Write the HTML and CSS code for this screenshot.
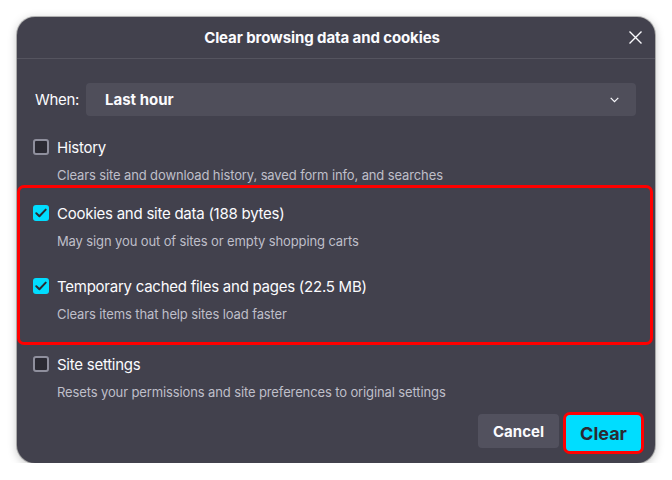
FILE: index.html
```html
<!DOCTYPE html>
<html lang="en">
<head>
<meta charset="utf-8">
<title>Clear browsing data and cookies</title>
<link rel="stylesheet" href="styles.css">
</head>
<body>
<div class="dialog">
  <div class="header">
    <div class="title">Clear browsing data and cookies</div>
    <button class="close" aria-label="Close">
      <svg width="13" height="13" viewBox="0 0 13 13"><path d="M0.5 0.5 L12.5 12.5 M12.5 0.5 L0.5 12.5" stroke="#fbfbfe" stroke-width="1.4" fill="none"/></svg>
    </button>
  </div>
  <div class="when">
    <span class="when-label">When:</span>
    <div class="select">
      <span class="select-value">Last hour</span>
      <svg class="chevron" width="9" height="6" viewBox="0 0 9 6"><path d="M0.7 0.8 L4.5 4.6 L8.3 0.8" stroke="#fbfbfe" stroke-width="1.2" fill="none"/></svg>
    </div>
  </div>

  <div class="item first">
    <div class="row"><span class="box"></span><span class="label">History</span></div>
    <div class="desc">Clears site and download history, saved form info, and searches</div>
  </div>

  <div class="highlight">
    <div class="item">
      <div class="row"><span class="box checked"><svg width="12" height="10" viewBox="0 0 12 10"><path d="M1.3 5.2 L4.4 8.2 L10.7 1.6" stroke="#2b2a33" stroke-width="2" fill="none" stroke-linecap="round" stroke-linejoin="round"/></svg></span><span class="label">Cookies and site data (188 bytes)</span></div>
      <div class="desc">May sign you out of sites or empty shopping carts</div>
    </div>
    <div class="item second">
      <div class="row"><span class="box checked"><svg width="12" height="10" viewBox="0 0 12 10"><path d="M1.3 5.2 L4.4 8.2 L10.7 1.6" stroke="#2b2a33" stroke-width="2" fill="none" stroke-linecap="round" stroke-linejoin="round"/></svg></span><span class="label">Temporary cached files and pages (22.5 MB)</span></div>
      <div class="desc">Clears items that help sites load faster</div>
    </div>
  </div>

  <div class="item after">
    <div class="row"><span class="box"></span><span class="label">Site settings</span></div>
    <div class="desc">Resets your permissions and site preferences to original settings</div>
  </div>

  <div class="footer">
    <button class="btn cancel">Cancel</button>
    <button class="btn clear">Clear</button>
  </div>
</div>
</body>
</html>
```

FILE: styles.css
```css
* { box-sizing: border-box; }
html, body { margin: 0; padding: 0; background: #ffffff; }
body {
  font-family: Inter, "Noto Sans", "Liberation Sans", sans-serif;
  color: #fbfbfe;
}
.dialog {
  margin: 17px 0 0 17px;
  width: 638px;
  height: 446px;
  background: #42414d;
  border-radius: 18px;
  box-shadow: 0 2px 10px rgba(0,0,0,0.25), 0 0 0 1px rgba(0,0,0,0.25);
  overflow: hidden;
}
.header {
  height: 42px;
  border-bottom: 1px solid #55545f;
  display: flex;
  align-items: center;
  justify-content: center;
  padding-right: 28px;
  position: relative;
}
.title {
  font-size: 15px;
  font-weight: 700;
  letter-spacing: -0.1px;
}
.close {
  position: absolute;
  right: 13px;
  top: 14px;
  width: 13px;
  height: 13px;
  padding: 0;
  border: 0;
  background: none;
  display: block;
}
.close svg { display: block; }
.when {
  display: flex;
  align-items: center;
  margin: 24px 19px 0 18px;
}
.when-label {
  font-size: 15px;
  letter-spacing: -0.3px;
  width: 51px;
}
.select {
  flex: 1;
  height: 33px;
  background: #4f4e5a;
  border-radius: 4px;
  display: flex;
  align-items: center;
  justify-content: space-between;
  padding: 0 17px 0 19px;
}
.select-value { font-size: 15px; font-weight: 700; }
.chevron { display: block; }
.item { padding-left: 16px; }
.item.first { margin-top: 21px; }
.row {
  display: flex;
  align-items: center;
  height: 20px;
}
.box {
  width: 16px;
  height: 16px;
  border: 2px solid #8f8f9d;
  background: #2b2a33;
  border-radius: 3px;
  margin-right: 8px;
  display: flex;
  align-items: center;
  justify-content: center;
  flex: none;
}
.box.checked {
  background: #00ddff;
  border: 0;
}
.box svg { display: block; }
.label { font-size: 15px; letter-spacing: -0.25px; }
.desc {
  margin-top: 9px;
  margin-left: 24px;
  font-size: 13px;
  letter-spacing: -0.12px;
  line-height: 18px;
  color: #bfbfc9;
}
.highlight {
  margin: 1px 2px 0 0;
  border: 3px solid #ff0000;
  border-radius: 7px;
  padding: 15px 0 19px 0;
}
.highlight .item { padding-left: 13px; }
.highlight .item.second { margin-top: 26px; }
.item.after { margin-top: 9px; }
.footer {
  display: flex;
  justify-content: flex-end;
  align-items: flex-start;
  margin: 11px 11px 0 0;
  gap: 4px;
}
.btn {
  font-family: inherit;
  font-weight: 700;
  border: 0;
  padding: 0;
}
.cancel {
  margin-top: 2px;
  width: 81px;
  height: 34px;
  background: #52515e;
  color: #fbfbfe;
  font-size: 15px;
  border-radius: 4px;
}
.clear {
  width: 81px;
  height: 42px;
  background: #00ddff;
  border: 3px solid #ff0000;
  border-radius: 7px;
  color: #2b2a33;
  font-size: 18px;
}
```
